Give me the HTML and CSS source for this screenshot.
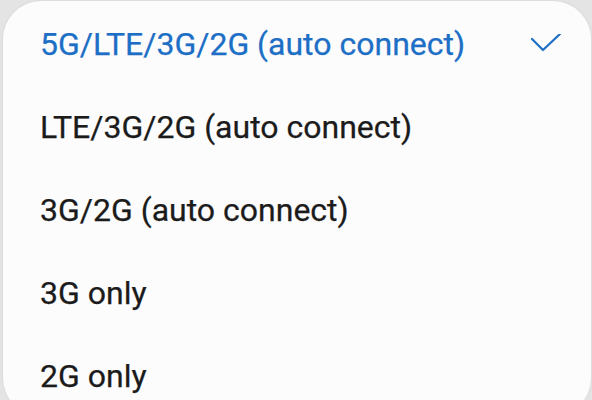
FILE: index.html
```html
<!DOCTYPE html>
<html>
<head>
    <title>Network mode</title>
    <link rel="stylesheet" href="styles.css">
</head>
<body>
    <div class="sheet">
        <ul class="options">
            <li class="option selected">
                <span>5G/LTE/3G/2G (auto connect)</span>
                <svg class="check" width="30" height="20" viewBox="0 0 30 20">
                    <path d="M1 5 L12 16 L29 0" fill="none" stroke="#1d6fc6" stroke-width="2.2" stroke-linecap="round" stroke-linejoin="round"/>
                </svg>
            </li>
            <li class="option">LTE/3G/2G (auto connect)</li>
            <li class="option">3G/2G (auto connect)</li>
            <li class="option">3G only</li>
            <li class="option">2G only</li>
        </ul>
    </div>
</body>
</html>
```

FILE: styles.css
```css
html, body {
    margin: 0;
    height: 100%;
    overflow: hidden;
}
body {
    background: #e4e4e4;
    font-family: Roboto, 'Noto Sans', sans-serif;
    padding: 1px 1px 0 3px;
    box-sizing: border-box;
}
.sheet {
    background: #fcfcfc;
    border-radius: 38px;
    height: 415px;
    box-shadow: 0 0 3px rgba(0, 0, 0, 0.08);
}
.options {
    list-style: none;
    margin: 0;
    padding: 1px 0 0 0;
}
.option {
    display: flex;
    align-items: center;
    justify-content: space-between;
    height: 83px;
    padding: 0 30px 0 37px;
    font-size: 32px;
    color: #1b1b1b;
    -webkit-text-stroke: 0.25px currentColor;
}
.option.selected {
    color: #1d6fc6;
}
```
